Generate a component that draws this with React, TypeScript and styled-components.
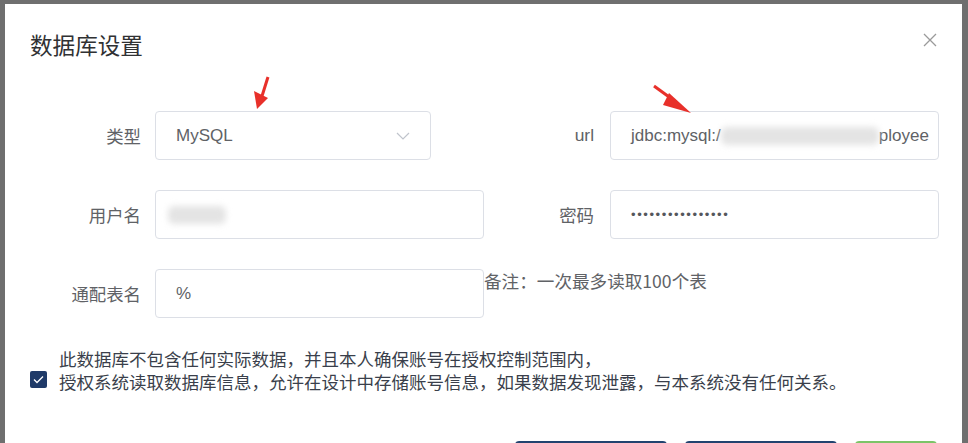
import React from 'react';
import styled, { createGlobalStyle } from 'styled-components';

const GlobalStyle = createGlobalStyle`
    html, body {
        margin: 0;
        padding: 0;
        background: #6f6f6f;
        overflow: hidden;
    }
    body {
        font-family: "Liberation Sans", "Noto Sans CJK SC", sans-serif;
    }
`;

const Overlay = styled.div`
    padding: 4px 6px 0 5px;
    height: 443px;
    box-sizing: border-box;
`;

const Dialog = styled.div`
    position: relative;
    height: 100%;
    background: #fff;
    overflow: hidden;
`;

const Header = styled.div`
    display: flex;
    justify-content: space-between;
    align-items: flex-start;
    padding: 28px 25px 0 25px;
`;

const Title = styled.h2`
    margin: 0;
    font-size: 22.6px;
    line-height: 26px;
    font-weight: normal;
    color: #303133;
    font-family: "Noto Sans CJK SC", sans-serif;
`;

const CloseButton = styled.button`
    margin-top: 1px;
    padding: 0;
    border: none;
    background: none;
    width: 14px;
    height: 14px;
    display: flex;
    cursor: pointer;
`;

const Form = styled.div`
    display: grid;
    grid-template-columns: 463px 455px;
    row-gap: 30px;
    margin-top: 53px;
    padding-left: 16px;
`;

const Field = styled.div`
    display: flex;
    align-items: center;
    height: 49px;
`;

const Label = styled.label<{ $width: number; $gap: number }>`
    width: ${({ $width }) => $width}px;
    margin-right: ${({ $gap }) => $gap}px;
    text-align: right;
    font-size: 17.4px;
    color: #606266;
    font-family: "Liberation Sans", "Noto Sans CJK SC", sans-serif;
    flex-shrink: 0;
`;

const Box = styled.div<{ $width: number; $align?: string; $pad?: number }>`
    position: relative;
    width: ${({ $width }) => $width}px;
    height: 49px;
    box-sizing: border-box;
    border: 1px solid #dcdfe6;
    border-radius: 4px;
    padding: 0 20px 0 ${({ $pad }) => $pad ?? 20}px;
    display: flex;
    align-items: center;
    justify-content: ${({ $align }) => $align ?? 'space-between'};
    font-size: 17px;
    color: #606266;
    white-space: nowrap;
    overflow: hidden;
`;

const Value = styled.span`
    white-space: nowrap;
    flex-shrink: 0;
`;

const Blur = styled.span<{ $w: number }>`
    display: inline-block;
    flex-shrink: 0;
    width: ${({ $w }) => $w}px;
    height: 18px;
    vertical-align: middle;
    background: #e4e4e4;
    filter: blur(3px);
    border-radius: 6px;
`;

const Dots = styled.span`
    font-size: 13px;
    letter-spacing: 1.6px;
    color: #55575c;
`;

const Note = styled.div`
    align-self: start;
    font-size: 17.6px;
    line-height: 24px;
    color: #606266;
    font-family: "Noto Sans CJK SC", sans-serif;
`;

const Agreement = styled.div`
    display: flex;
    align-items: flex-end;
    gap: 12px;
    margin: 29px 0 0 25px;
`;

const Check = styled.span`
    width: 17px;
    height: 17px;
    border-radius: 2px;
    background: #1f3a68;
    display: flex;
    align-items: center;
    justify-content: center;
    margin-bottom: 5px;
    flex-shrink: 0;
`;

const AgreementText = styled.div`
    font-size: 17.5px;
    line-height: 23px;
    color: #3a3f4b;
    font-family: "Noto Sans CJK SC", sans-serif;
`;

const Footer = styled.div`
    display: flex;
    justify-content: flex-end;
    gap: 18px;
    margin-top: 48px;
    padding-right: 25px;
`;

const Button = styled.button<{ $width: number; $color: string }>`
    width: ${({ $width }) => $width}px;
    height: 40px;
    border: none;
    border-radius: 4px;
    background: ${({ $color }) => $color};
`;

const Arrow = styled.svg<{ $x: number; $y: number }>`
    position: absolute;
    left: ${({ $x }) => $x}px;
    top: ${({ $y }) => $y}px;
    overflow: visible;
`;

const Chevron = () => (
    <svg width="14" height="10" viewBox="0 0 14 10">
        <path d="M1 2 L7 8 L13 2" fill="none" stroke="#c0c4cc" strokeWidth="1.2" />
    </svg>
);

export default function App() {
    return (
        <>
            <GlobalStyle />
            <Overlay>
                <Dialog>
                    <Header>
                        <Title>数据库设置</Title>
                        <CloseButton aria-label="close">
                            <svg width="14" height="14" viewBox="0 0 14 14">
                                <path d="M1 1 L13 13 M13 1 L1 13" stroke="#9a9a9a" strokeWidth="1.3" />
                            </svg>
                        </CloseButton>
                    </Header>

                    <Form>
                        <Field>
                            <Label $width={120} $gap={14}>类型</Label>
                            <Box $width={276}>
                                <Value>MySQL</Value>
                                <Chevron />
                            </Box>
                        </Field>
                        <Field>
                            <Label $width={110} $gap={16}>url</Label>
                            <Box $width={329} $align="flex-start">
                                <Value>jdbc:mysql:/</Value>
                                <Blur $w={158} />
                                <Value>ployee</Value>
                            </Box>
                        </Field>
                        <Field>
                            <Label $width={120} $gap={14}>用户名</Label>
                            <Box $width={329} $align="flex-start" $pad={12}>
                                <Blur $w={58} />
                            </Box>
                        </Field>
                        <Field>
                            <Label $width={110} $gap={16}>密码</Label>
                            <Box $width={329}>
                                <Dots>••••••••••••••••</Dots>
                            </Box>
                        </Field>
                        <Field>
                            <Label $width={120} $gap={14}>通配表名</Label>
                            <Box $width={329}>
                                <Value>%</Value>
                            </Box>
                        </Field>
                        <Note>备注：一次最多读取100个表</Note>
                    </Form>

                    <Agreement>
                        <Check>
                            <svg width="11" height="9" viewBox="0 0 11 9">
                                <path d="M1 4.5 L4 7.5 L10 1.5" fill="none" stroke="#fff" strokeWidth="1.3" />
                            </svg>
                        </Check>
                        <AgreementText>
                            此数据库不包含任何实际数据，并且本人确保账号在授权控制范围内，<br />
                            授权系统读取数据库信息，允许在设计中存储账号信息，如果数据发现泄露，与本系统没有任何关系。
                        </AgreementText>
                    </Agreement>

                    <Footer>
                        <Button $width={152} $color="#22436f" aria-label="测试连接" />
                        <Button $width={152} $color="#22436f" aria-label="读取数据" />
                        <Button $width={82} $color="#7cc467" aria-label="确定" />
                    </Footer>

                    <Arrow $x={246} $y={70} width="22" height="38">
                        <path d="M17 3 L11 22" stroke="#e8302a" strokeWidth="3" />
                        <path d="M3 17 L17 24 L6 35 Z" fill="#e8302a" />
                    </Arrow>
                    <Arrow $x={645} $y={78} width="42" height="34">
                        <path d="M4 4 L26 20" stroke="#e8302a" strokeWidth="3" />
                        <path d="M19 11 L41 31 L13 23 Z" fill="#e8302a" />
                    </Arrow>
                </Dialog>
            </Overlay>
        </>
    );
}
